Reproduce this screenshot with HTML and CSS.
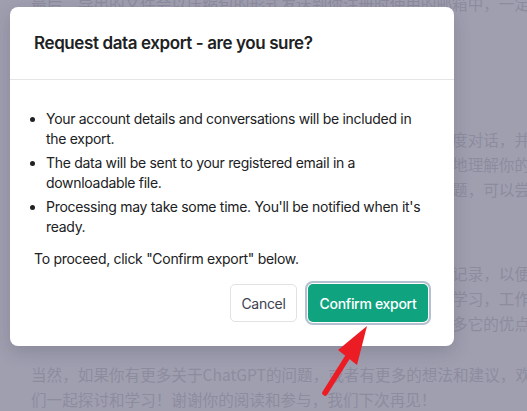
FILE: index.html
```html
<!DOCTYPE html>
<html lang="zh-CN">
<head>
  <meta charset="UTF-8" />
  <meta name="viewport" content="width=device-width, initial-scale=1" />
  <title>Request data export</title>
  <link rel="stylesheet" href="styles.css">
</head>
<body>
  <div class="page">
    <article class="article">
      <p class="p-intro">最后，导出的文件会以压缩包的形式发送到你注册时使用的邮箱中，一定要注意查看垃圾邮件。<br>收到邮件后请尽快下载。<br>链接只在一段时间内有效。<br>过期后需要重新申请。</p>
      <p class="p-long">总的来说，这是一个非常实用的智能工具，它能和用户进行深度对话，并且能够给出有用的回答。<br>它会根据上下文和你的提问方式不断调整回答的内容，能更好地理解你的需求和意图。<br>如果你对某个话题感兴趣，或者在生活中遇到了难以解决的问题，可以尝试向它提问。<br>相信它不会让你失望。</p>
      <p class="p-mid">导出的数据中包含你的账户信息，以及你和它之间全部的聊天记录，以便你以后随时查看和使用。<br>它能够在很多方面为你提供帮助，无论是日常生活，还是你的学习，工作和研究都没有问题。<br>希望你能够多多尝试使用这个工具，在实际使用过程中发现更多它的优点和价值。</p>
      <p>当然，如果你有更多关于ChatGPT的问题，或者有更多的想法和建议，欢迎随时和我交流。让我<br>们一起探讨和学习！谢谢你的阅读和参与，我们下次再见！</p>
    </article>
  </div>

  <div class="modal" role="dialog">
    <div class="modal-header">
      <h2>Request data export - are you sure?</h2>
    </div>
    <div class="modal-body">
      <ul>
        <li>Your account details and conversations will be included in the export.</li>
        <li>The data will be sent to your registered email in a downloadable file.</li>
        <li>Processing may take some time. You'll be notified when it's ready.</li>
      </ul>
      <p>To proceed, click "Confirm export" below.</p>
      <div class="actions">
        <button class="btn btn-neutral">Cancel</button>
        <button class="btn btn-primary">Confirm export</button>
      </div>
    </div>
  </div>

  <!-- red annotation arrow -->
  <svg class="arrow" width="60" height="84" viewBox="0 0 60 84">
    <line x1="29" y1="38" x2="7" y2="73" stroke="#ec1c24" stroke-width="5.5" stroke-linecap="round" />
    <polygon points="49,6 20,30 39,45" fill="#ec1c24" />
  </svg>
</body>
</html>
```

FILE: styles.css
```css
body {
  margin: 0;
  height: 411px;
  overflow: hidden;
  background-color: #a09fb0;
  font-family: "Inter", "Noto Sans", sans-serif;
}
.page {
  width: 760px;
}
.article {
  margin-top: -9.5px;
  padding-left: 31px;
  font-family: "Noto Sans CJK SC", sans-serif;
  font-size: 15.6px;
  line-height: 25px;
  color: #8d8c9e;
  white-space: nowrap;
}
.article p {
  margin: 0 0 26px;
}
.article .p-intro {
  margin-bottom: 36px;
}
.article .p-long {
  margin-bottom: 34px;
}
.modal {
  position: absolute;
  left: 10px;
  top: 7px;
  width: 444px;
  background: #fff;
  border-radius: 8px;
  box-shadow: 0 6px 18px rgba(40,40,60,0.18);
}
.modal-header {
  padding: 22px 24px;
  border-bottom: 1px solid #e5e5e6;
}
.modal-header h2 {
  margin: 0;
  font-size: 17px;
  line-height: 28px;
  font-weight: 600;
  letter-spacing: -0.4px;
  color: #202123;
}
.modal-body {
  padding: 29px 24px 24px;
  font-size: 14px;
  line-height: 20px;
  letter-spacing: -0.3px;
  color: #202123;
}
.modal-body ul {
  margin: 0;
  padding-left: 12px;
}
.modal-body li {
  margin-bottom: 4px;
}
.modal-body li:last-child {
  margin-bottom: 0;
}
.modal-body p {
  margin: 12px 0 0;
}
.actions {
  display: flex;
  justify-content: flex-end;
  gap: 11px;
  margin-top: 15px;
  padding-right: 2px;
}
.btn {
  box-sizing: border-box;
  height: 38px;
  padding: 0;
  border-radius: 5px;
  font-family: inherit;
  font-size: 14px;
  letter-spacing: -0.3px;
  white-space: nowrap;
  cursor: pointer;
}
.btn-neutral {
  background: #fff;
  border: 1px solid #e2e2e5;
  color: #40414f;
  width: 67px;
}
.btn-primary {
  background-color: #10a37f;
  border: none;
  color: #fff;
  font-weight: 500;
  width: 120px;
  box-shadow: 0 0 0 1px #fff, 0 0 0 3px #b4bfcf;
}
.arrow {
  position: absolute;
  left: 318px;
  top: 320px;
}
```
